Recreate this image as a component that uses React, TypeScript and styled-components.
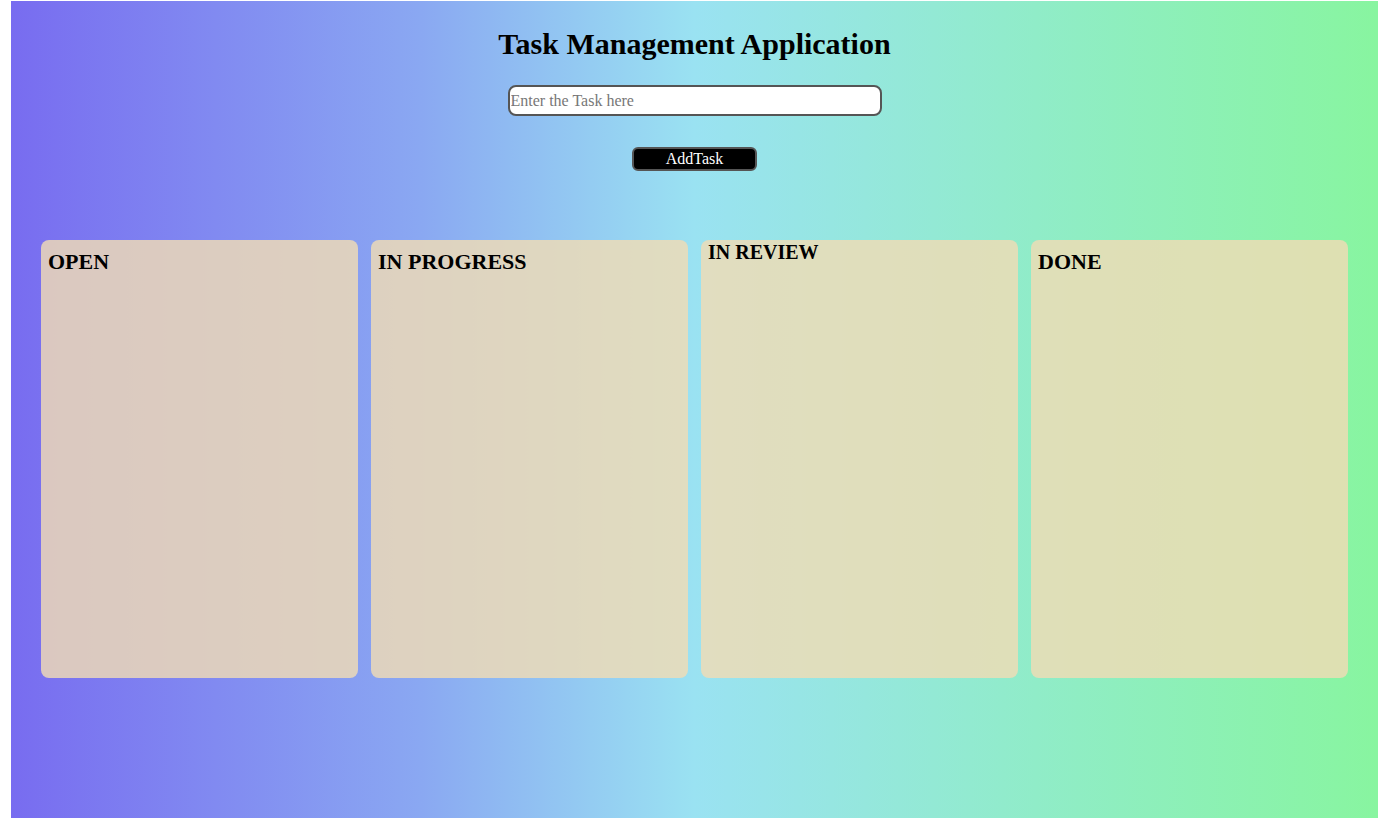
import styled, { createGlobalStyle } from 'styled-components';

const GlobalStyle = createGlobalStyle`
  html, body { margin: 0; background: #fff; }
  body { padding: 1px 8px 10px 11px; font-family: "Liberation Serif", "DejaVu Serif", serif; }
`;

const Page = styled.div`
  height: 817px;
  background: linear-gradient(90deg, #786cf0 0%, #8aa8f2 30%, #9ae2f2 50%, #90ecc8 75%, #88f5a0 100%);
  display: flex;
  flex-direction: column;
  align-items: center;
  padding: 0 30px;
`;

const Title = styled.h1`
  margin: 26px 0 0;
  font-size: 30px;
  font-weight: bold;
  color: #000;
`;

const TaskInput = styled.input`
  margin-top: 24px;
  width: 374px;
  height: 31px;
  box-sizing: border-box;
  border: 2px solid #555;
  border-radius: 8px;
  padding: 0 1px;
  font-family: inherit;
  font-size: 16px;
  &::placeholder { color: #777; }
`;

const AddButton = styled.button`
  margin-top: 31px;
  width: 125px;
  height: 24px;
  background: #000;
  color: #fff;
  border: 2px solid #555;
  border-radius: 6px;
  font-family: inherit;
  font-size: 16px;
  padding: 0;
`;

const Board = styled.div`
  margin-top: 69px;
  width: 100%;
  display: grid;
  grid-template-columns: repeat(4, 1fr);
  gap: 13px;
`;

const Column = styled.div`
  height: 438px;
  border-radius: 8px;
  background: rgba(240, 220, 180, 0.82);
  padding: 0 7px;
`;

const ColumnTitle = styled.h2<{ $small?: boolean }>`
  margin: ${({ $small }) => ($small ? '1px 0 0' : '9px 0 0')};
  font-size: ${({ $small }) => ($small ? '20px' : '22px')};
  font-weight: bold;
  color: #000;
`;

const columns = ['OPEN', 'IN PROGRESS', 'IN REVIEW', 'DONE'];

export default function App() {
  return (
    <>
      <GlobalStyle />
      <Page>
        <Title>Task Management Application</Title>
        <TaskInput placeholder="Enter the Task here" />
        <AddButton>AddTask</AddButton>
        <Board>
          {columns.map((c) => (
            <Column key={c}>
              <ColumnTitle $small={c === 'IN REVIEW'}>{c}</ColumnTitle>
            </Column>
          ))}
        </Board>
      </Page>
    </>
  );
}
